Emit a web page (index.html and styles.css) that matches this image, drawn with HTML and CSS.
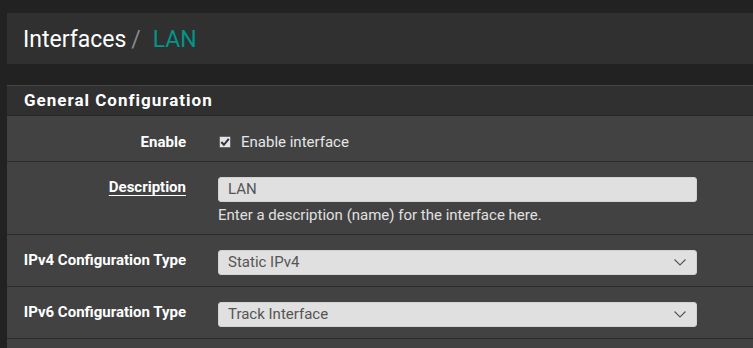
FILE: index.html
```html
<!DOCTYPE html>
<html>
<head>
<meta charset="utf-8">
<link rel="stylesheet" href="styles.css">
</head>
<body>
<div class="page">
  <div class="crumbs">
    <span class="crumb">Interfaces</span><span class="sep">/</span><span class="crumb active">LAN</span>
  </div>
  <div class="panel">
    <div class="panel-head">General Configuration</div>
    <div class="panel-body">
      <div class="row row-enable">
        <div class="label">Enable</div>
        <div class="ctrl">
          <label class="check">
            <svg class="cb" width="12" height="12" viewBox="0 0 12 12">
              <rect x="0.5" y="0.5" width="11" height="11" fill="#e4e4e4" stroke="#3a3a3a" stroke-dasharray="1 1"/>
              <polyline points="2.3,6 4.9,8.8 9.8,2.8" fill="none" stroke="#2c3440" stroke-width="2"/>
            </svg>
            <span>Enable interface</span>
          </label>
        </div>
      </div>
      <div class="row row-desc">
        <div class="label"><span class="ul">Description</span></div>
        <div class="ctrl">
          <div class="input">LAN</div>
          <div class="help">Enter a description (name) for the interface here.</div>
        </div>
      </div>
      <div class="row row-sel">
        <div class="label">IPv4 Configuration Type</div>
        <div class="ctrl">
          <div class="input select"><span>Static IPv4</span>
            <svg class="chev" width="12" height="7" viewBox="0 0 12 7"><polyline points="0.5,0.5 6,6 11.5,0.5" fill="none" stroke="#555" stroke-width="1.1"/></svg>
          </div>
        </div>
      </div>
      <div class="row row-sel">
        <div class="label">IPv6 Configuration Type</div>
        <div class="ctrl">
          <div class="input select"><span>Track Interface</span>
            <svg class="chev" width="12" height="7" viewBox="0 0 12 7"><polyline points="0.5,0.5 6,6 11.5,0.5" fill="none" stroke="#555" stroke-width="1.1"/></svg>
          </div>
        </div>
      </div>
      <div class="row-tail"></div>
    </div>
  </div>
</div>
</body>
</html>
```
FILE: styles.css
```css
html, body {
  margin: 0;
  padding: 0;
  background: #222222;
  font-family: Roboto, "Liberation Sans", sans-serif;
  color: #e6e6e6;
  overflow: hidden;
}
.page {
  padding: 13px 0 0 7px;
}
.crumbs {
  background: #303030;
  height: 51px;
  display: flex;
  align-items: center;
  padding: 2px 0 0 16px;
  font-size: 23px;
  color: #ffffff;
  box-sizing: border-box;
}
.crumb { line-height: 1; }
.sep {
  color: #8a8a8a;
  padding: 0 12px 0 5px;
}
.active { color: #009688; }
.panel {
  margin-top: 21px;
  border-top: 1px solid #444444;
  background: #424242;
}
.panel-head {
  background: #303030;
  height: 29px;
  line-height: 29px;
  padding-left: 17px;
  font-size: 17px;
  font-weight: 700;
  letter-spacing: 1px;
  color: #ffffff;
  border-bottom: 1px solid #262626;
}
.row {
  display: grid;
  grid-template-columns: 194px 1fr;
  border-bottom: 1px solid #2b2b2b;
  box-sizing: border-box;
}
.label {
  text-align: right;
  padding-right: 15px;
  font-size: 15px;
  font-weight: 700;
  line-height: 20px;
  color: #ffffff;
}
.ctrl {
  padding-left: 17px;
  font-size: 15px;
  line-height: 20px;
}
.row-enable { height: 46px; padding-top: 16px; }
.row-desc { height: 73px; padding-top: 15px; }
.row-sel { height: 52px; padding-top: 15px; }
.row-tail { height: 10px; }
.ul {
  text-decoration: underline;
  text-underline-offset: 3px;
  text-decoration-thickness: 1px;
}
.check {
  display: flex;
  align-items: center;
  gap: 10px;
  padding-left: 1px;
  color: #e6e6e6;
}
.cb { display: block; }
.input {
  width: 479px;
  height: 25px;
  box-sizing: border-box;
  background: #e0e0e0;
  border: 1px solid #d2d2d2;
  border-radius: 3px;
  padding-left: 9px;
  font-size: 15px;
  line-height: 23px;
  color: #555555;
}
.select {
  display: flex;
  align-items: center;
  justify-content: space-between;
  padding-right: 10px;
}
.chev { display: block; }
.help {
  margin-top: 5px;
  color: #e0e0e0;
  line-height: 17px;
}
```
